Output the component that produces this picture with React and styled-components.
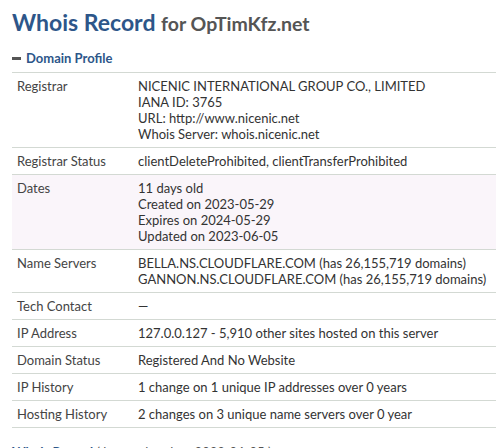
import React from "react";
import styled, { createGlobalStyle } from "styled-components";

const Global = createGlobalStyle`
  html, body { margin: 0; padding: 0; background: #fff; }
  body { font-family: Lato, "Open Sans", sans-serif; color: #333; }
`;

const Page = styled.div`
  padding: 7px 4px 0 12px;
  width: 484px;
`;

const Title = styled.h1`
  margin: 0;
  font-size: 23px;
  line-height: 30px;
  font-weight: 700;
  color: #2d5689;
  white-space: nowrap;
`;

const TitleFor = styled.span`
  font-size: 19.5px;
  color: #555;
  font-weight: 700;
`;

const SectionHead = styled.div`
  display: flex;
  align-items: center;
  gap: 5px;
  margin-top: 9px;
  height: 20px;
  font-size: 13px;
  font-weight: 700;
  color: #2d5689;
`;

const Minus = styled.span`
  display: inline-block;
  width: 9px;
  height: 3px;
  background: #555;
`;

const Table = styled.div`
  margin-top: 4px;
  display: grid;
  grid-template-columns: 121px 1fr;
  border-top: 1px solid #d3d9d3;
`;

const Cell = styled.div`
  padding: 5px;
  font-size: 13px;
  line-height: 16px;
  color: ${(p) => (p.$label ? "#444" : "#333")};
  background: ${(p) => (p.$shade ? "#faf5fa" : "transparent")};
  border-bottom: 1px solid #d3d9d3;
  white-space: nowrap;
`;

const Footer = styled.div`
  margin-top: 16px;
  font-size: 13px;
  color: #555;
  white-space: nowrap;
`;

const FooterStrong = styled.span`
  color: #2d5689;
  font-weight: 700;
`;

const rows = [
  ["Registrar", ["NICENIC INTERNATIONAL GROUP CO., LIMITED", "IANA ID: 3765", "URL: http://www.nicenic.net", "Whois Server: whois.nicenic.net"]],
  ["Registrar Status", ["clientDeleteProhibited, clientTransferProhibited"]],
  ["Dates", ["11 days old", "Created on 2023-05-29", "Expires on 2024-05-29", "Updated on 2023-06-05"], true],
  ["Name Servers", ["BELLA.NS.CLOUDFLARE.COM (has 26,155,719 domains)", "GANNON.NS.CLOUDFLARE.COM (has 26,155,719 domains)"]],
  ["Tech Contact", ["—"]],
  ["IP Address", ["127.0.0.127 - 5,910 other sites hosted on this server"]],
  ["Domain Status", ["Registered And No Website"]],
  ["IP History", ["1 change on 1 unique IP addresses over 0 years"]],
  ["Hosting History", ["2 changes on 3 unique name servers over 0 year"]],
];

export default function App() {
  return (
    <Page>
      <Global />
      <Title>
        Whois Record <TitleFor>for OpTimKfz.net</TitleFor>
      </Title>
      <SectionHead>
        <Minus />
        Domain Profile
      </SectionHead>
      <Table>
        {rows.map(([label, vals, shade]) => (
          <React.Fragment key={label}>
            <Cell $label $shade={shade}>{label}</Cell>
            <Cell $shade={shade}>
              {vals.map((v, i) => (
                <div key={i}>{v}</div>
              ))}
            </Cell>
          </React.Fragment>
        ))}
      </Table>
      <Footer>
        <FooterStrong>Whois Record</FooterStrong> ( last updated on 2023-06-05 )
      </Footer>
    </Page>
  );
}
